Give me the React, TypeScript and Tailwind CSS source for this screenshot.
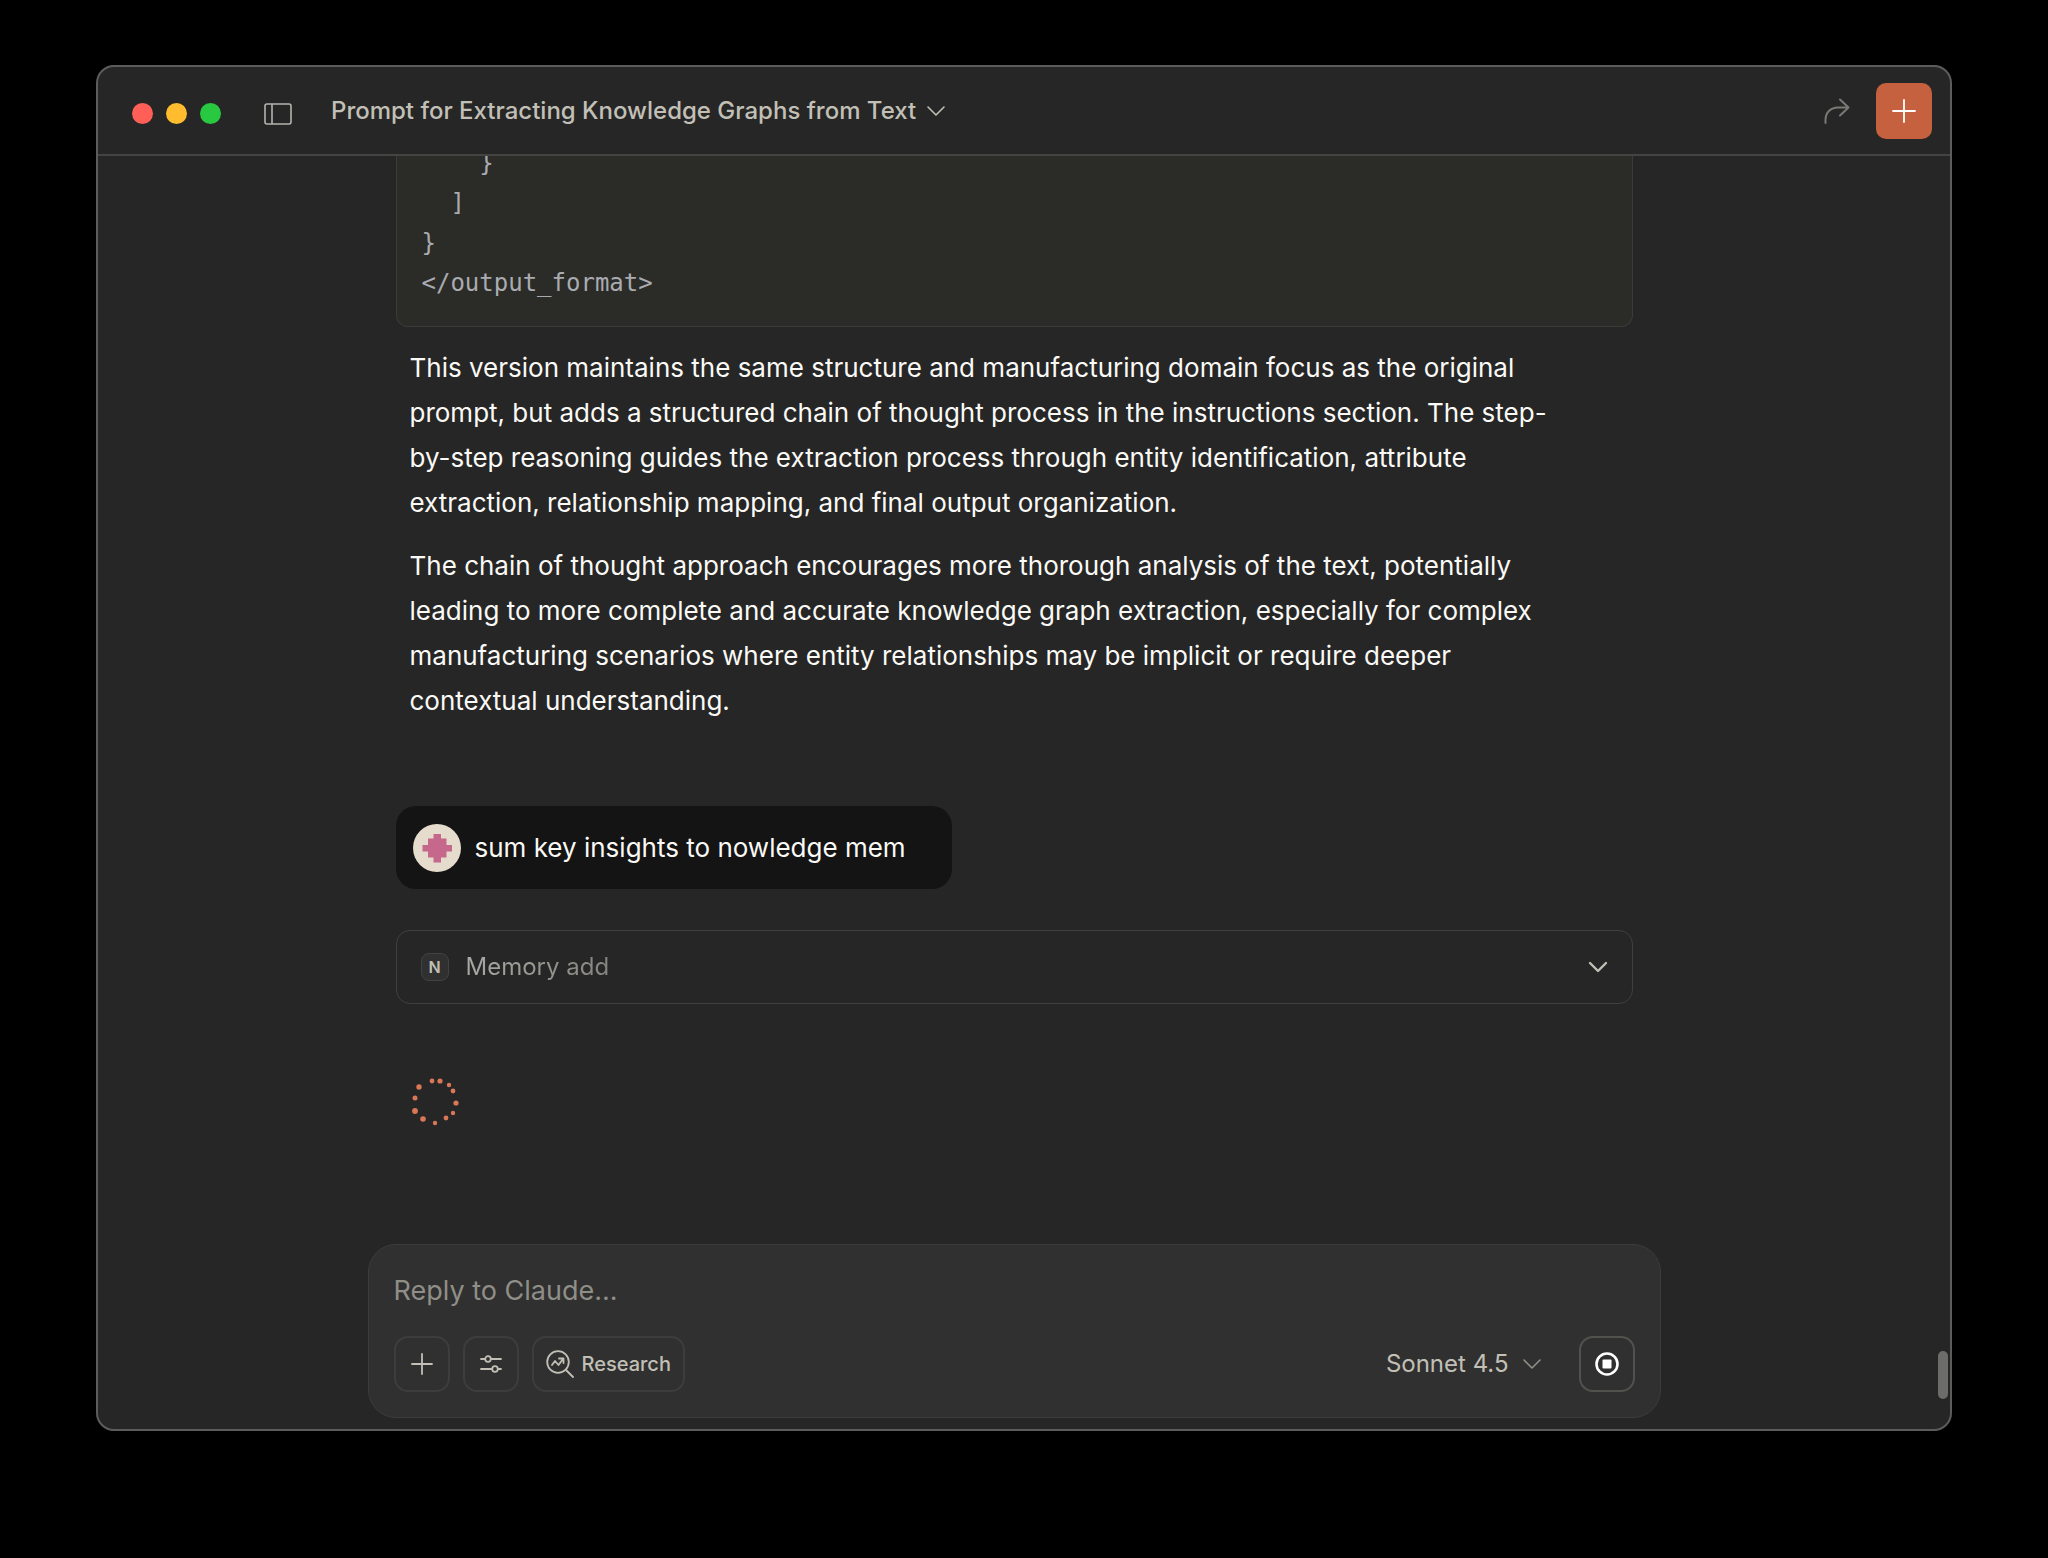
import { useState } from 'react';

const CODE_LINES = ['    }', '  ]', '}', '</output_format>'];

const PARAGRAPHS = [
  'This version maintains the same structure and manufacturing domain focus as the original prompt, but adds a structured chain of thought process in the instructions section. The step-by-step reasoning guides the extraction process through entity identification, attribute extraction, relationship mapping, and final output organization.',
  'The chain of thought approach encourages more thorough analysis of the text, potentially leading to more complete and accurate knowledge graph extraction, especially for complex manufacturing scenarios where entity relationships may be implicit or require deeper contextual understanding.',
];

const SPINNER_DOTS = [
  [20, 4, 2.4],
  [28, 4, 2.6],
  [37, 8, 2.2],
  [41, 14, 2.4],
  [44, 26, 2.6],
  [41, 36, 2.2],
  [34, 41, 2.4],
  [23, 46, 2.2],
  [11, 42, 2.8],
  [3, 34, 2.9],
  [3, 21, 2.5],
  [7, 10, 2.7],
];

function Chevron({ className, strokeWidth = 2 }: { className?: string; strokeWidth?: number }) {
  return (
    <svg viewBox="0 0 20 12" fill="none" stroke="currentColor" strokeWidth={strokeWidth} strokeLinecap="round" strokeLinejoin="round" className={className} aria-hidden="true">
      <path d="M2 2l8 8 8-8" />
    </svg>
  );
}

function TitleBar() {
  return (
    <header className="flex h-[89px] shrink-0 items-center border-b-2 border-[#444443] pl-[34px] pr-[18px]">
      <div className="flex gap-[13px] pt-1.5">
        <span className="size-[21px] rounded-full bg-[#ff5f57]" />
        <span className="size-[21px] rounded-full bg-[#febc2e]" />
        <span className="size-[21px] rounded-full bg-[#28c840]" />
      </div>
      <button type="button" aria-label="Toggle sidebar" className="ml-[43px] pt-1.5 text-[#b5b4ae]">
        <svg viewBox="0 0 28 22" fill="none" stroke="currentColor" strokeWidth="1.6" className="h-[22px] w-7">
          <rect x="1" y="1" width="26" height="20" rx="2" />
          <path d="M8 1v20" />
        </svg>
      </button>
      <button type="button" className="ml-[39px] flex items-center gap-2.5 text-2xl font-medium text-[#c2c0b6]">
        Prompt for Extracting Knowledge Graphs from Text
        <Chevron className="h-3 w-5" strokeWidth={1.6} />
      </button>
      <div className="ml-auto flex items-center gap-[26px]">
        <button type="button" aria-label="Share" className="text-[#7a7975]">
          <svg viewBox="0 0 26 26" fill="none" stroke="currentColor" strokeWidth="2" strokeLinecap="round" strokeLinejoin="round" className="size-[26px]">
            <path d="M1.500 25v-3C1.500 14 7 9.500 14 9.500h10.500M16 1.500l8.500 8-8.500 8" />
          </svg>
        </button>
        <button type="button" aria-label="New chat" className="flex size-14 items-center justify-center rounded-[10px] bg-[#c6613f] text-white">
          <svg viewBox="0 0 24 24" stroke="currentColor" strokeWidth="1.8" strokeLinecap="round" className="size-6">
            <path d="M12 1v22M1 12h22" />
          </svg>
        </button>
      </div>
    </header>
  );
}

function Avatar() {
  return (
    <svg viewBox="0 0 48 48" className="size-12 shrink-0" aria-hidden="true">
      <circle cx="24" cy="24" r="24" fill="#e5dccd" />
      <path fill="#c6688c" d="M20.500 10h7.500v4.500h5.500V21H39v6.500h-5.500v6H28v5h-7.500v-5H15v-6H9.500V21H15v-6.500h5.500z" />
    </svg>
  );
}

function Conversation() {
  return (
    <div className="flex min-h-0 flex-1 flex-col justify-end overflow-hidden px-7">
      <pre className="rounded-b-xl border border-t-0 border-[#3b3b38] bg-[#2b2b28] px-[25px] pb-[22px] text-2xl leading-[39px] text-[#a9abb0]">
        <code className="font-['DejaVu_Sans_Mono','Liberation_Mono',monospace]">{CODE_LINES.join('\n')}</code>
      </pre>
      <div className="flex flex-col gap-[18px] pl-3.5 pr-14 pt-[18px] text-[26px] leading-[45px] text-[#faf9f5]">
        {PARAGRAPHS.map((text) => (
          <p key={text}>{text}</p>
        ))}
      </div>
      <div className="mt-[83px] flex items-center gap-3.5 self-start rounded-[20px] bg-[#141414] py-[17px] pl-[17px] pr-[46px] text-[26px] leading-[49px] text-[#faf9f5]">
        <Avatar />
        <p>sum key insights to nowledge mem</p>
      </div>
      <button type="button" className="mt-[41px] flex h-[74px] shrink-0 items-center rounded-[14px] border border-[#3f3f3c] px-6">
        <span className="flex size-7 items-center justify-center rounded-lg border border-[#424240] bg-[#303030] text-base font-semibold text-[#c2c0b6]">N</span>
        <span className="ml-[17px] bg-linear-to-r from-[#a9a8a2] to-[#85847e] bg-clip-text text-2xl text-transparent">Memory add</span>
        <Chevron className="ml-auto h-3 w-5 text-[#c2c0b6]" strokeWidth={2.4} />
      </button>
      <div className="px-4 pb-[117px] pt-[73px]">
        <svg viewBox="0 0 50 50" className="size-[50px]" fill="#d97757" role="img" aria-label="Thinking">
          {SPINNER_DOTS.map(([cx, cy, r]) => (
            <circle key={`${cx}-${cy}`} cx={cx} cy={cy} r={r} />
          ))}
        </svg>
      </div>
    </div>
  );
}

function Composer() {
  const [message, setMessage] = useState('');

  return (
    <form className="mb-[11px] flex shrink-0 flex-col rounded-[28px] border border-[#3c3c39] bg-[#303030] px-[25px] pb-[25px] pt-[26px]" onSubmit={(e) => e.preventDefault()}>
      <textarea
        rows={1}
        aria-label="Reply to Claude"
        placeholder="Reply to Claude..."
        value={message}
        onChange={(e) => setMessage(e.target.value)}
        className="block h-10 w-full resize-none bg-transparent text-[27px] leading-10 text-[#faf9f5] outline-none placeholder:text-[#8f8e87]"
      />
      <div className="mt-[25px] flex items-center gap-[13px] text-[#c2c0b6]">
        <button type="button" aria-label="Add attachment" className="flex size-14 items-center justify-center rounded-[14px] border-2 border-[#3d3d3b]">
          <svg viewBox="0 0 22 22" stroke="currentColor" strokeWidth="1.8" strokeLinecap="round" className="size-[22px]">
            <path d="M11 1v20M1 11h20" />
          </svg>
        </button>
        <button type="button" aria-label="Search and tools" className="flex size-14 items-center justify-center rounded-[14px] border-2 border-[#3d3d3b]">
          <svg viewBox="0 0 22 20" fill="none" stroke="currentColor" strokeWidth="1.8" strokeLinecap="round" className="h-5 w-[22px]">
            <path d="M1 5h4M11 5h10M1 15h11M18 15h3" />
            <circle cx="8" cy="5" r="2.800" />
            <circle cx="15" cy="15" r="2.800" />
          </svg>
        </button>
        <button type="button" className="flex h-14 items-center gap-2 rounded-[14px] border-2 border-[#3d3d3b] px-3 text-xl font-medium">
          <svg viewBox="0 0 28 28" fill="none" stroke="currentColor" strokeWidth="1.8" strokeLinecap="round" strokeLinejoin="round" className="size-7">
            <circle cx="12" cy="12" r="10.800" />
            <path d="M20 20l7 7M6 15l3-4 3.500 4L17 9M13 8.500h4.500V13" />
          </svg>
          Research
        </button>
        <button type="button" className="ml-auto flex items-center gap-[13px] text-2xl">
          Sonnet 4.5
          <Chevron className="h-3 w-5 text-[#8f8e87]" strokeWidth={1.6} />
        </button>
        <button type="button" aria-label="Stop response" className="ml-6 flex size-14 items-center justify-center rounded-[14px] border-2 border-[#51514e] text-white">
          <svg viewBox="0 0 24 24" className="size-6">
            <circle cx="12" cy="12" r="10.500" fill="none" stroke="currentColor" strokeWidth="2.600" />
            <rect x="7.500" y="7.500" width="9" height="9" rx="1" fill="currentColor" />
          </svg>
        </button>
      </div>
    </form>
  );
}

export default function App() {
  return (
    <div className="flex h-screen w-full bg-black px-24 pb-[127px] pt-[65px] font-[Inter,'Liberation_Sans',sans-serif]">
      <div className="flex min-w-0 flex-1 flex-col overflow-hidden rounded-[18px] border-2 border-[#5c5c5a] bg-[#262626]">
        <TitleBar />
        <div className="flex min-h-0 flex-1">
          <main className="flex min-w-0 flex-1 justify-center">
            <div className="flex w-full max-w-[1293px] flex-col">
              <Conversation />
              <Composer />
            </div>
          </main>
          <div className="flex w-5 shrink-0 flex-col items-center justify-end pb-[30px] pl-1.5">
            <span className="h-12 w-2.5 rounded-full bg-[#6c6c6a]" />
          </div>
        </div>
      </div>
    </div>
  );
}
